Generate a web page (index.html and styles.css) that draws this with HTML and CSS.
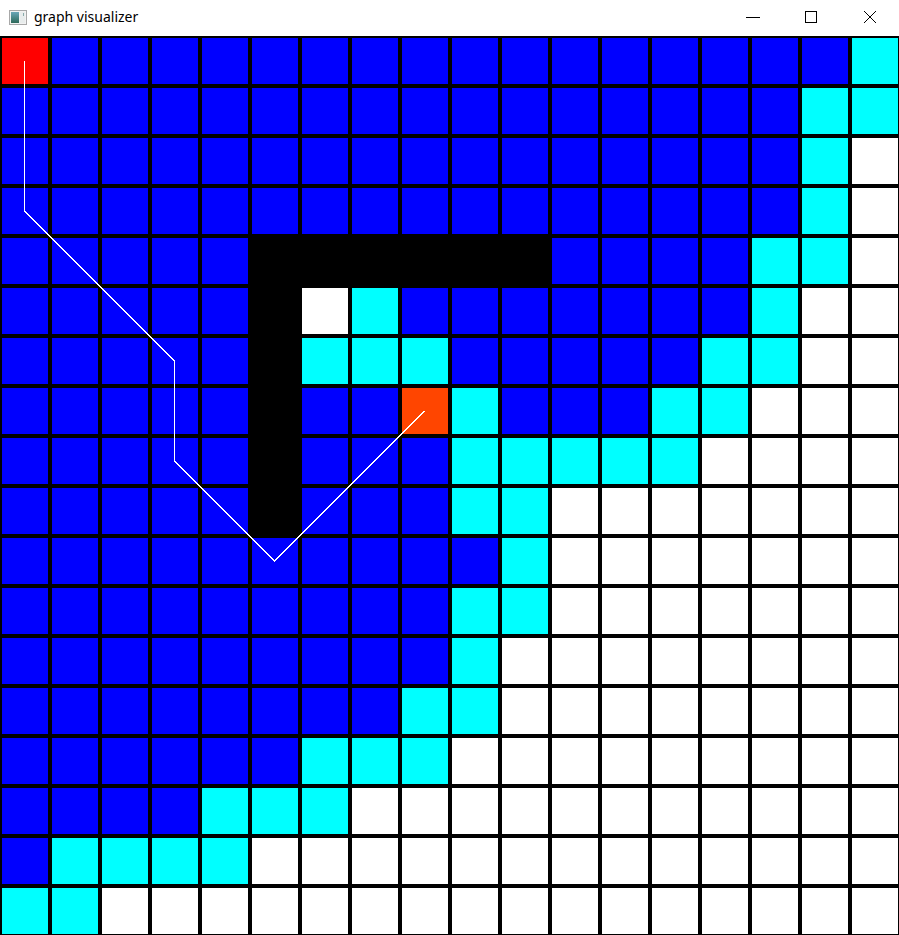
FILE: index.html
```html
<!DOCTYPE html>
<html>
<head>
<meta charset="utf-8">
<title>graph visualizer</title>
<link rel="stylesheet" href="styles.css">
</head>
<body>
<div class="window">
  <div class="titlebar">
    <svg class="app-icon" width="18" height="16" viewBox="0 0 18 16">
      <defs>
        <linearGradient id="g1" x1="0" y1="0" x2="0" y2="1">
          <stop offset="0" stop-color="#6aa6b8"/>
          <stop offset="1" stop-color="#2e6a5a"/>
        </linearGradient>
      </defs>
      <rect x="0.5" y="0.5" width="17" height="14" fill="#f2f2f2" stroke="#a8a8a8"/>
      <rect x="2" y="2" width="8" height="11" fill="url(#g1)"/>
      <rect x="11" y="2" width="5" height="11" fill="#e8ecec"/>
      <rect x="14" y="3" width="1" height="3" fill="#8aa"/>
    </svg>
    <span class="title">graph visualizer</span>
    <div class="controls">
      <svg class="ctl" width="46" height="30" viewBox="0 0 46 30"><line x1="15" y1="17.5" x2="29" y2="17.5" stroke="#000" stroke-width="1"/></svg>
      <svg class="ctl" width="46" height="30" viewBox="0 0 46 30"><rect x="17.5" y="11.5" width="11" height="11" fill="none" stroke="#000" stroke-width="1"/></svg>
      <svg class="ctl" width="46" height="30" viewBox="0 0 46 30"><path d="M17 11 L29 23 M29 11 L17 23" stroke="#000" stroke-width="1" fill="none"/></svg>
    </div>
  </div>
  <div class="board">
    <div class="grid">
      <div class="c r"></div><div class="c b"></div><div class="c b"></div><div class="c b"></div><div class="c b"></div><div class="c b"></div><div class="c b"></div><div class="c b"></div><div class="c b"></div><div class="c b"></div><div class="c b"></div><div class="c b"></div><div class="c b"></div><div class="c b"></div><div class="c b"></div><div class="c b"></div><div class="c b"></div><div class="c y"></div>
      <div class="c b"></div><div class="c b"></div><div class="c b"></div><div class="c b"></div><div class="c b"></div><div class="c b"></div><div class="c b"></div><div class="c b"></div><div class="c b"></div><div class="c b"></div><div class="c b"></div><div class="c b"></div><div class="c b"></div><div class="c b"></div><div class="c b"></div><div class="c b"></div><div class="c y"></div><div class="c y"></div>
      <div class="c b"></div><div class="c b"></div><div class="c b"></div><div class="c b"></div><div class="c b"></div><div class="c b"></div><div class="c b"></div><div class="c b"></div><div class="c b"></div><div class="c b"></div><div class="c b"></div><div class="c b"></div><div class="c b"></div><div class="c b"></div><div class="c b"></div><div class="c b"></div><div class="c y"></div><div class="c w"></div>
      <div class="c b"></div><div class="c b"></div><div class="c b"></div><div class="c b"></div><div class="c b"></div><div class="c b"></div><div class="c b"></div><div class="c b"></div><div class="c b"></div><div class="c b"></div><div class="c b"></div><div class="c b"></div><div class="c b"></div><div class="c b"></div><div class="c b"></div><div class="c b"></div><div class="c y"></div><div class="c w"></div>
      <div class="c b"></div><div class="c b"></div><div class="c b"></div><div class="c b"></div><div class="c b"></div><div class="c k"></div><div class="c k"></div><div class="c k"></div><div class="c k"></div><div class="c k"></div><div class="c k"></div><div class="c b"></div><div class="c b"></div><div class="c b"></div><div class="c b"></div><div class="c y"></div><div class="c y"></div><div class="c w"></div>
      <div class="c b"></div><div class="c b"></div><div class="c b"></div><div class="c b"></div><div class="c b"></div><div class="c k"></div><div class="c w"></div><div class="c y"></div><div class="c b"></div><div class="c b"></div><div class="c b"></div><div class="c b"></div><div class="c b"></div><div class="c b"></div><div class="c b"></div><div class="c y"></div><div class="c w"></div><div class="c w"></div>
      <div class="c b"></div><div class="c b"></div><div class="c b"></div><div class="c b"></div><div class="c b"></div><div class="c k"></div><div class="c y"></div><div class="c y"></div><div class="c y"></div><div class="c b"></div><div class="c b"></div><div class="c b"></div><div class="c b"></div><div class="c b"></div><div class="c y"></div><div class="c y"></div><div class="c w"></div><div class="c w"></div>
      <div class="c b"></div><div class="c b"></div><div class="c b"></div><div class="c b"></div><div class="c b"></div><div class="c k"></div><div class="c b"></div><div class="c b"></div><div class="c o"></div><div class="c y"></div><div class="c b"></div><div class="c b"></div><div class="c b"></div><div class="c y"></div><div class="c y"></div><div class="c w"></div><div class="c w"></div><div class="c w"></div>
      <div class="c b"></div><div class="c b"></div><div class="c b"></div><div class="c b"></div><div class="c b"></div><div class="c k"></div><div class="c b"></div><div class="c b"></div><div class="c b"></div><div class="c y"></div><div class="c y"></div><div class="c y"></div><div class="c y"></div><div class="c y"></div><div class="c w"></div><div class="c w"></div><div class="c w"></div><div class="c w"></div>
      <div class="c b"></div><div class="c b"></div><div class="c b"></div><div class="c b"></div><div class="c b"></div><div class="c k"></div><div class="c b"></div><div class="c b"></div><div class="c b"></div><div class="c y"></div><div class="c y"></div><div class="c w"></div><div class="c w"></div><div class="c w"></div><div class="c w"></div><div class="c w"></div><div class="c w"></div><div class="c w"></div>
      <div class="c b"></div><div class="c b"></div><div class="c b"></div><div class="c b"></div><div class="c b"></div><div class="c b"></div><div class="c b"></div><div class="c b"></div><div class="c b"></div><div class="c b"></div><div class="c y"></div><div class="c w"></div><div class="c w"></div><div class="c w"></div><div class="c w"></div><div class="c w"></div><div class="c w"></div><div class="c w"></div>
      <div class="c b"></div><div class="c b"></div><div class="c b"></div><div class="c b"></div><div class="c b"></div><div class="c b"></div><div class="c b"></div><div class="c b"></div><div class="c b"></div><div class="c y"></div><div class="c y"></div><div class="c w"></div><div class="c w"></div><div class="c w"></div><div class="c w"></div><div class="c w"></div><div class="c w"></div><div class="c w"></div>
      <div class="c b"></div><div class="c b"></div><div class="c b"></div><div class="c b"></div><div class="c b"></div><div class="c b"></div><div class="c b"></div><div class="c b"></div><div class="c b"></div><div class="c y"></div><div class="c w"></div><div class="c w"></div><div class="c w"></div><div class="c w"></div><div class="c w"></div><div class="c w"></div><div class="c w"></div><div class="c w"></div>
      <div class="c b"></div><div class="c b"></div><div class="c b"></div><div class="c b"></div><div class="c b"></div><div class="c b"></div><div class="c b"></div><div class="c b"></div><div class="c y"></div><div class="c y"></div><div class="c w"></div><div class="c w"></div><div class="c w"></div><div class="c w"></div><div class="c w"></div><div class="c w"></div><div class="c w"></div><div class="c w"></div>
      <div class="c b"></div><div class="c b"></div><div class="c b"></div><div class="c b"></div><div class="c b"></div><div class="c b"></div><div class="c y"></div><div class="c y"></div><div class="c y"></div><div class="c w"></div><div class="c w"></div><div class="c w"></div><div class="c w"></div><div class="c w"></div><div class="c w"></div><div class="c w"></div><div class="c w"></div><div class="c w"></div>
      <div class="c b"></div><div class="c b"></div><div class="c b"></div><div class="c b"></div><div class="c y"></div><div class="c y"></div><div class="c y"></div><div class="c w"></div><div class="c w"></div><div class="c w"></div><div class="c w"></div><div class="c w"></div><div class="c w"></div><div class="c w"></div><div class="c w"></div><div class="c w"></div><div class="c w"></div><div class="c w"></div>
      <div class="c b"></div><div class="c y"></div><div class="c y"></div><div class="c y"></div><div class="c y"></div><div class="c w"></div><div class="c w"></div><div class="c w"></div><div class="c w"></div><div class="c w"></div><div class="c w"></div><div class="c w"></div><div class="c w"></div><div class="c w"></div><div class="c w"></div><div class="c w"></div><div class="c w"></div><div class="c w"></div>
      <div class="c y"></div><div class="c y"></div><div class="c w"></div><div class="c w"></div><div class="c w"></div><div class="c w"></div><div class="c w"></div><div class="c w"></div><div class="c w"></div><div class="c w"></div><div class="c w"></div><div class="c w"></div><div class="c w"></div><div class="c w"></div><div class="c w"></div><div class="c w"></div><div class="c w"></div><div class="c w"></div>
    </div>
    <svg class="path" width="900" height="900" viewBox="0 0 900 900">
      <polyline points="24.5,25 24.5,175 174.5,325 174.5,425 274.5,525 424.5,375" fill="none" stroke="#ffffff" stroke-width="1" shape-rendering="crispEdges"/>
    </svg>
  </div>
</div>
</body>
</html>
```

FILE: styles.css
```css
html, body {
  margin: 0;
  padding: 0;
  background: #ffffff;
  overflow: hidden;
}
.window {
  width: 899px;
  height: 935px;
  overflow: hidden;
  display: flex;
  flex-direction: column;
}
.titlebar {
  height: 36px;
  flex: 0 0 36px;
  display: flex;
  align-items: flex-start;
  background: #ffffff;
  box-sizing: border-box;
  padding-left: 9px;
}
.app-icon {
  margin-top: 10px;
  flex: 0 0 auto;
}
.title {
  margin-left: 7px;
  margin-top: 7px;
  font-family: "Noto Sans", "Open Sans", sans-serif;
  font-size: 14px;
  line-height: 20px;
  color: #000000;
}
.controls {
  margin-left: auto;
  display: flex;
  margin-right: 6px;
}
.ctl {
  display: block;
  margin-top: 0;
}
.ctl:first-child { margin-right: 11px; }
.ctl:nth-child(2) { margin-right: 13px; }
.board {
  position: relative;
  width: 900px;
  height: 900px;
  flex: 0 0 auto;
}
.grid {
  display: grid;
  grid-template-columns: repeat(18, 50px);
  grid-template-rows: repeat(18, 50px);
}
.c {
  box-sizing: border-box;
  border: 2px solid #000000;
}
.b { background: #0000ff; }
.y { background: #00ffff; }
.w { background: #ffffff; }
.k { background: #000000; }
.r { background: #ff0000; }
.o { background: #ff4500; }
.path {
  position: absolute;
  left: 0;
  top: 0;
  pointer-events: none;
}
```
